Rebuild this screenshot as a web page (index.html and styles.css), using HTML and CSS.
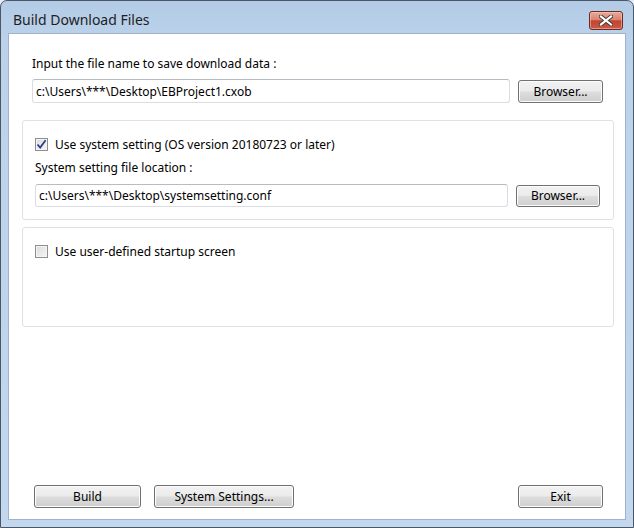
FILE: index.html
```html
<!DOCTYPE html>
<html lang="en">
<head>
  <meta charset="UTF-8" />
  <title>Build Download Files</title>
  <link rel="stylesheet" href="styles.css">
</head>
<body>
  <div class="window">
    <div class="titlebar">
      <span class="title">Build Download Files</span>
      <button class="close-btn" aria-label="Close">
        <svg width="14" height="11" viewBox="0 0 14 11">
          <path d="M2 1.5 L12 9.5 M12 1.5 L2 9.5" stroke="#3a3a3a" stroke-width="4" stroke-linecap="square" fill="none" />
          <path d="M2 1.5 L12 9.5 M12 1.5 L2 9.5" stroke="#ffffff" stroke-width="2.2" stroke-linecap="square" fill="none" />
        </svg>
      </button>
    </div>

    <div class="client">
      <div class="file-section">
        <label class="field-label" for="downloadFile">Input the file name to save download data :</label>
        <div class="path-row">
          <input type="text" id="downloadFile" class="path-input" value="c:\Users\***\Desktop\EBProject1.cxob" />
          <button class="btn browse-btn">Browser...</button>
        </div>
      </div>

      <div class="group">
        <label class="check-row">
          <span class="checkbox checked">
            <svg width="11" height="11" viewBox="0 0 11 11">
              <path d="M1.5 5.5 L4.2 8.6 L9.6 1.2" stroke="#2b3f8c" stroke-width="1.8" fill="none" />
            </svg>
          </span>
          Use system setting (OS version 20180723 or later)
        </label>
        <label class="field-label sub-label" for="settingFile">System setting file location :</label>
        <div class="path-row">
          <input type="text" id="settingFile" class="path-input" value="c:\Users\***\Desktop\systemsetting.conf" />
          <button class="btn browse-btn">Browser...</button>
        </div>
      </div>

      <div class="group">
        <label class="check-row">
          <span class="checkbox"></span>
          Use user-defined startup screen
        </label>
      </div>

      <div class="actions">
        <button class="btn build-btn">Build</button>
        <button class="btn settings-btn">System Settings...</button>
        <button class="btn exit-btn">Exit</button>
      </div>
    </div>
  </div>
</body>
</html>
```

FILE: styles.css
```css
body {
  margin: 0;
  font-family: "Noto Sans", "Open Sans", sans-serif;
  font-size: 12px;
  color: #000;
  background-color: #e8ecf0;
}

.window {
  width: 632px;
  height: 526px;
  border: 1px solid #4a5866;
  border-radius: 7px 7px 0 0;
  background: linear-gradient(to bottom, #b3cbe6 0px, #bcd2eb 40px, #c3d7ee 100%);
  display: flex;
  flex-direction: column;
}

.titlebar {
  height: 32px;
  display: flex;
  align-items: flex-start;
  justify-content: space-between;
  padding: 0 10px 0 12px;
}

.title {
  margin-top: 9px;
  font-size: 14px;
  color: #1e1e1e;
}

.close-btn {
  margin-top: 10px;
  width: 34px;
  height: 19px;
  padding: 0;
  border: 1px solid #6b2a22;
  border-radius: 3px;
  background: linear-gradient(to bottom, #e9a999 0%, #dc8470 45%, #c3432f 52%, #c95a44 100%);
  box-shadow: inset 0 0 0 1px rgba(255, 210, 200, 0.5);
  display: flex;
  align-items: center;
  justify-content: center;
}

.client {
  flex: 1;
  margin: 0 7px 7px 7px;
  background-color: #fff;
  border: 1px solid #9fb4cc;
  display: flex;
  flex-direction: column;
  padding: 0 11px 11px 13px;
}

.file-section {
  padding: 22px 11px 0 10px;
}

.field-label {
  display: block;
  height: 16px;
  line-height: 16px;
}

.path-row {
  display: flex;
  align-items: center;
  gap: 8px;
  margin-top: 7px;
}

.path-input {
  flex: 1;
  height: 24px;
  box-sizing: border-box;
  border: 1px solid #d7dde3;
  border-top-color: #b6bcc4;
  border-radius: 3px;
  padding: 0 3px;
  font-family: inherit;
  font-size: 12px;
  color: #000;
  background-color: #fff;
}

.btn {
  height: 23px;
  box-sizing: border-box;
  border: 1px solid #707070;
  border-radius: 3px;
  background: linear-gradient(to bottom, #f2f2f2 0%, #ebebeb 48%, #dddddd 52%, #cfcfcf 100%);
  box-shadow: inset 0 0 0 1px #fcfcfc;
  font-family: inherit;
  font-size: 12px;
  color: #000;
  padding: 0;
}

.browse-btn {
  width: 85px;
}

.group {
  margin-top: 17px;
  height: 100px;
  box-sizing: border-box;
  border: 1px solid #dce2e6;
  border-radius: 3px;
  padding: 16px 13px 12px 12px;
}

.group + .group {
  margin-top: 7px;
}

.group .path-row {
  margin-top: 8px;
}

.group .path-input {
  height: 23px;
}

.group .browse-btn {
  width: 84px;
  height: 22px;
}

.check-row {
  display: flex;
  align-items: center;
  gap: 7px;
  height: 14px;
}

.checkbox {
  width: 13px;
  height: 13px;
  box-sizing: border-box;
  border: 1px solid #8f8f8f;
  background: linear-gradient(135deg, #dcdcdc 0%, #f6f6f6 100%);
  box-shadow: inset 0 0 0 1px #f4f4f4;
  display: flex;
  align-items: center;
  justify-content: center;
}

.sub-label {
  margin-top: 9px;
}

.actions {
  margin-top: auto;
  display: flex;
  gap: 13px;
  padding: 0 11px 0 12px;
}

.build-btn {
  width: 107px;
}

.settings-btn {
  width: 140px;
}

.exit-btn {
  width: 85px;
  margin-left: auto;
}
```
